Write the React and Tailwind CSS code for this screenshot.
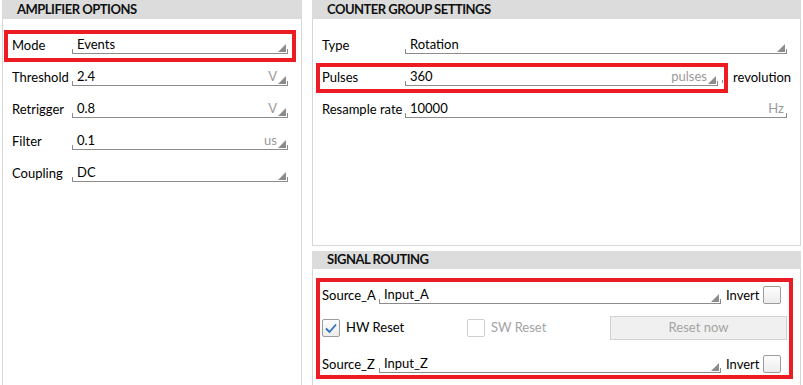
const font = { fontFamily: 'Lato, "Liberation Sans", sans-serif' }

const Grip = () => (
  <svg width="8" height="8" viewBox="0 0 8 8" className="self-end mb-[1px] shrink-0">
    <polygon points="8,0 8,8 0,8" fill="#8c8c8c" />
  </svg>
)

const Field = ({ value, unit, grip = true, className = 'flex-1' }) => (
  <div className={`${className} h-[17px] flex items-end border-b border-[#8c8c8c]`}>
    <div className="h-[4px] border-l border-[#8c8c8c]" />
    <div className="flex-1 self-stretch flex items-start pl-[4px] text-[13px] leading-[14px] text-black truncate">{value}</div>
    {unit && <div className="self-start text-[13px] leading-[14px] text-[#9a9a9a] mr-[1px]">{unit}</div>}
    {grip && <Grip />}
    <div className="ml-[1px] h-[4px] border-r border-[#8c8c8c]" />
  </div>
)

const Row = ({ label, labelW, children }) => (
  <div className="flex items-start">
    <div className={`${labelW} shrink-0 text-[13px] leading-[16px] text-black`}>{label}</div>
    {children}
  </div>
)

const Header = ({ children, h = 'h-[19px]' }) => (
  <div className={`${h} bg-[#dcdcdc] flex items-center pl-[15px] text-[13px] font-bold tracking-[-0.5px] text-[#111]`}>
    {children}
  </div>
)

const Check = ({ checked, disabled }) => (
  <div className={`w-[18px] h-[18px] shrink-0 rounded-[2px] border flex items-center justify-center ${disabled ? 'border-[#cfcfcf] bg-white' : 'border-[#9c9c9c] bg-gradient-to-b from-[#fdfdfd] to-[#ececec]'}`}>
    {checked && (
      <svg width="14" height="12" viewBox="0 0 14 12">
        <path d="M2 6.5 L5.5 10 L12 2.5" fill="none" stroke="#2f6fc0" strokeWidth="1.8" />
      </svg>
    )}
  </div>
)

export default function App() {
  return (
    <div style={font} className="relative w-[803px] h-[385px] bg-white overflow-hidden flex gap-[10px] pl-[2px]">
      {/* Amplifier options */}
      <div className="w-[300px] flex flex-col">
        <Header>AMPLIFIER OPTIONS</Header>
        <div className="flex-1 border-x border-[#d6d6d6] pl-[9px] pr-[13px] pt-[18px] flex flex-col gap-[15px]">
          <Row label="Mode" labelW="w-[60px]"><Field value="Events" /></Row>
          <Row label="Threshold" labelW="w-[60px]"><Field value="2.4" unit="V" /></Row>
          <Row label="Retrigger" labelW="w-[60px]"><Field value="0.8" unit="V" /></Row>
          <Row label="Filter" labelW="w-[60px]"><Field value="0.1" unit="us" /></Row>
          <Row label="Coupling" labelW="w-[60px]"><Field value="DC" /></Row>
        </div>
      </div>

      <div className="w-[489px] flex flex-col">
        {/* Counter group settings */}
        <Header>COUNTER GROUP SETTINGS</Header>
        <div className="h-[227px] border-x border-b border-[#d6d6d6] pl-[9px] pr-[13px] pt-[18px] flex flex-col gap-[15px]">
          <Row label="Type" labelW="w-[83px]"><Field value="Rotation" /></Row>
          <Row label="Pulses" labelW="w-[83px]">
            <Field value="360" unit="pulses" />
            <div className="w-[69px] shrink-0 flex items-start">
              <div className="mt-[11px] ml-[4px] h-[3px] border-l border-[#8c8c8c]" />
              <div className="ml-[10px] text-[13px] leading-[16px] text-black">revolution</div>
            </div>
          </Row>
          <Row label="Resample rate" labelW="w-[83px]"><Field value="10000" unit="Hz" grip={false} /></Row>
        </div>

        {/* Signal routing */}
        <div className="mt-[5px] flex-1 flex flex-col">
          <Header h="h-[18px]">SIGNAL ROUTING</Header>
          <div className="flex-1 border-x border-[#d6d6d6] pl-[9px] pt-[18px] flex flex-col">
            <Row label="Source_A" labelW="w-[57px]">
              <Field value="Input_A" className="w-[342px]" />
              <div className="ml-[5px] text-[13px] leading-[16px] text-black">Invert</div>
              <div className="ml-[4px] -mt-[1px]"><Check /></div>
            </Row>
            <div className="mt-[12px] h-[24px] flex items-center">
              <div className="w-[145px] flex items-center">
                <Check checked />
                <span className="ml-[6px] text-[13px] text-black">HW Reset</span>
              </div>
              <div className="w-[143px] flex items-center">
                <Check disabled />
                <span className="ml-[6px] text-[13px] text-[#a3a3a3]">SW Reset</span>
              </div>
              <div className="w-[177px] h-[24px] bg-[#f0f0f0] border border-[#d2d2d2] flex items-center justify-center text-[13px] text-[#a3a3a3]">
                Reset now
              </div>
            </div>
            <div className="mt-[16px]">
              <Row label="Source_Z" labelW="w-[57px]">
                <Field value="Input_Z" className="w-[342px]" />
                <div className="ml-[5px] text-[13px] leading-[16px] text-black">Invert</div>
                <div className="ml-[4px] -mt-[1px]"><Check /></div>
              </Row>
            </div>
          </div>
        </div>
      </div>

      {/* annotation boxes */}
      <div className="absolute left-[4px] top-[30px] w-[292px] h-[32px] border-[4px] border-[#ed1c24] pointer-events-none" />
      <div className="absolute left-[316px] top-[63px] w-[412px] h-[30px] border-[4px] border-[#ed1c24] pointer-events-none" />
      <div className="absolute left-[316px] top-[278px] w-[477px] h-[101px] border-[4px] border-[#ed1c24] pointer-events-none" />
    </div>
  )
}
